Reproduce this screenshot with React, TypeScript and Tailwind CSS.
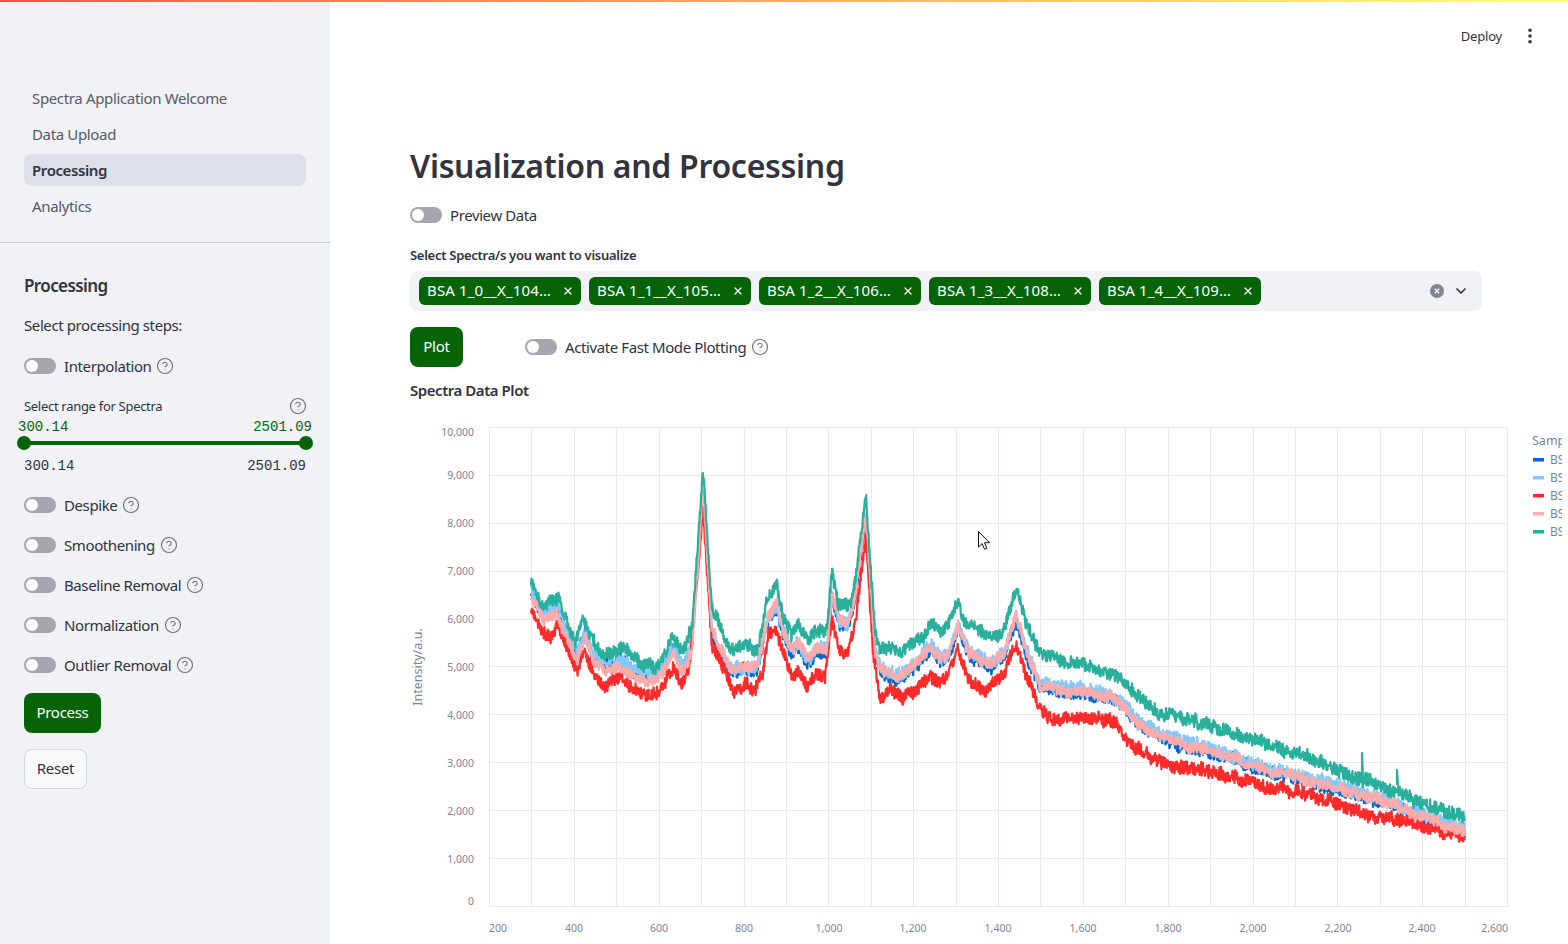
import { ChevronDown, CircleHelp, EllipsisVertical, X } from "lucide-react";

type Pt = [number, number];

// series outlines in page pixels, read off the plot
const greenLine: Pt[] = [[531,583],[543,608],[558,598],[575,642],[583,620],[597,650],[607,655],[618,647],[627,650],[640,662],[657,668],[673,637],[683,652],[692,627],[703,470],[712,607],[720,623],[730,652],[745,643],[757,650],[768,597],[777,585],[783,617],[792,633],[798,625],[808,642],[815,630],[827,630],[832,572],[838,603],[850,607],[855,583],[866,499],[875,633],[880,650],[890,647],[900,652],[924,635],[932,621],[940,632],[947,627],[958,600],[965,625],[973,623],[991,638],[1005,627],[1016,588],[1026,623],[1040,655],[1066,662],[1082,663],[1106,672],[1121,678],[1137,697],[1161,713],[1208,725],[1236,733],[1295,753],[1335,768],[1374,783],[1414,800],[1465,817]];
const redLine: Pt[] = [[531,607],[540,628],[550,640],[558,628],[567,647],[577,670],[584,653],[593,673],[603,685],[620,675],[633,687],[650,697],[663,687],[673,668],[683,685],[690,663],[703,510],[712,647],[720,660],[733,692],[747,683],[753,692],[763,673],[768,633],[775,628],[783,653],[793,678],[798,668],[807,688],[815,673],[825,678],[832,620],[840,650],[848,653],[855,622],[866,540],[873,653],[880,700],[890,690],[900,698],[916,693],[930,675],[938,683],[949,673],[958,648],[969,680],[985,692],[1003,678],[1016,643],[1026,673],[1040,710],[1052,718],[1082,717],[1117,723],[1129,745],[1153,757],[1177,767],[1216,772],[1256,783],[1295,792],[1335,803],[1374,817],[1414,823],[1465,838]];
const pinkLine: Pt[] = [[531,597],[543,620],[557,613],[567,640],[577,660],[585,637],[593,663],[607,670],[620,665],[633,677],[653,682],[663,673],[673,653],[683,672],[692,650],[703,490],[712,633],[720,647],[730,668],[745,665],[757,668],[768,617],[777,603],[783,630],[792,650],[798,643],[808,660],[817,647],[827,650],[832,593],[840,620],[848,623],[855,597],[866,515],[875,653],[882,670],[890,675],[900,677],[916,663],[931,645],[940,660],[949,655],[958,625],[969,652],[991,665],[1005,652],[1016,618],[1026,650],[1040,685],[1058,690],[1082,692],[1109,697],[1123,705],[1137,723],[1169,740],[1216,753],[1256,767],[1295,777],[1335,787],[1374,798],[1414,813],[1465,832]];

function rng(seed: number) {
  return () => {
    seed = (seed + 0x6d2b79f5) | 0;
    let t = Math.imul(seed ^ (seed >>> 15), 1 | seed);
    t = (t + Math.imul(t ^ (t >>> 7), 61 | t)) ^ t;
    return ((t ^ (t >>> 14)) >>> 0) / 4294967296;
  };
}

function yAt(line: Pt[], x: number) {
  for (let i = 1; i < line.length; i++) {
    if (x <= line[i][0]) {
      const [x0, y0] = line[i - 1];
      const [x1, y1] = line[i];
      return y0 + ((y1 - y0) * (x - x0)) / (x1 - x0);
    }
  }
  return line[line.length - 1][1];
}

function noisy(line: Pt[], seed: number, amp: number, offset: (x: number) => number = () => 0) {
  const r = rng(seed);
  let drift = 0;
  let d = "";
  for (let x = 531; x <= 1465; x += 0.42) {
    drift = drift * 0.9 + (r() - 0.5) * 1.8;
    const y = yAt(line, x) + offset(x) + drift + (r() - 0.5) * amp;
    d += `${d ? "L" : "M"}${x.toFixed(1)} ${y.toFixed(1)}`;
  }
  return d;
}

const blueOffset = (x: number) => (x < 700 ? -4 : x < 880 ? 4 : x < 1040 ? 3 : 1);
const lightOffset = (x: number) => (x < 700 ? -7 : x < 880 ? 1 : x < 1040 ? -1 : -3);

const series = [
  { color: "#0068c9", d: noisy(pinkLine, 11, 13, blueOffset) },
  { color: "#83c9ff", d: noisy(pinkLine, 23, 13, lightOffset) },
  { color: "#ff2b2b", d: noisy(redLine, 37, 13) },
  { color: "#ffabab", d: noisy(pinkLine, 41, 11) },
  { color: "#29b09d", d: noisy(greenLine, 59, 13) + "M1362 780L1362 753L1363 780M1397 785L1397 770L1398 785" },
];

const yLabels: [string, number][] = [["10,000",436],["9,000",479],["8,000",527],["7,000",575],["6,000",623],["5,000",671],["4,000",719],["3,000",767],["2,000",815],["1,000",863],["0",905]];
const xLabels: [string, number, "start" | "middle" | "end"][] = [["200",489,"start"],["400",574,"middle"],["600",659,"middle"],["800",744,"middle"],["1,000",829,"middle"],["1,200",913,"middle"],["1,400",998,"middle"],["1,600",1083,"middle"],["1,800",1168,"middle"],["2,000",1253,"middle"],["2,200",1338,"middle"],["2,400",1422,"middle"],["2,600",1508,"end"]];
const gridY = [427, 475, 523, 571, 619, 666, 714, 762, 810, 858, 906];
const gridX = Array.from({ length: 25 }, (_, i) => 489 + i * 42.42);
const legendRows = ["BSA 1_0__X_104...", "BSA 1_1__X_105...", "BSA 1_2__X_106...", "BSA 1_3__X_108...", "BSA 1_4__X_109..."];

const SpectraChart = () => (
  <svg viewBox="410 415 1158 530" className="block w-[1158px] h-[530px] shrink-0 font-['Noto_Sans',sans-serif]">
    {gridY.map((y) => (
      <line key={y} x1={489} x2={1507.5} y1={y + 0.5} y2={y + 0.5} stroke="#e6e8f2" />
    ))}
    {gridX.map((x) => (
      <line key={x} x1={Math.round(x) + 0.5} x2={Math.round(x) + 0.5} y1={427} y2={907} stroke="#e6e8f2" />
    ))}
    {series.map((s) => (
      <path key={s.color} d={s.d} fill="none" stroke={s.color} strokeWidth={2.2} strokeLinejoin="round" />
    ))}
    {yLabels.map(([label, y]) => (
      <text key={label} x={474} y={y} textAnchor="end" fontSize={10.5} fill="#808495">{label}</text>
    ))}
    {xLabels.map(([label, x, anchor]) => (
      <text key={label} x={x} y={932} textAnchor={anchor} fontSize={10.5} fill="#808495">{label}</text>
    ))}
    <text x={422} y={667} textAnchor="middle" fontSize={12.5} fill="#808495" transform="rotate(-90 422 667)">Intensity/a.u.</text>
    <text x={1532} y={445} fontSize={12.5} fill="#808495">Sample</text>
    {legendRows.map((label, i) => (
      <g key={label}>
        <rect x={1533} y={458 + i * 18} width={11} height={3.5} fill={series[i].color} />
        <text x={1550} y={464 + i * 18} fontSize={12} fill="#808495">{label}</text>
      </g>
    ))}
  </svg>
);

const Help = () => <CircleHelp size={18} strokeWidth={1.5} className="text-[#6f717c] shrink-0" />;

const Toggle = ({ label, help }: { label: string; help?: boolean }) => (
  <div className="flex items-center h-6">
    <span className="flex items-center w-8 h-4 p-0.5 rounded-full bg-[#a6a6b0] shrink-0">
      <span className="w-3 h-3 rounded-full bg-white" />
    </span>
    <span className="ml-2 text-[15px] tracking-[-0.4px] text-[#31333f]">{label}</span>
    {help && <span className="ml-[5px]"><Help /></span>}
  </div>
);

const Tag = ({ label }: { label: string }) => (
  <div className="flex items-center justify-between w-[162px] h-7 pb-px pl-2 pr-[7px] rounded-md bg-[#066406] text-white text-[15px] tracking-[0.15px]">
    <span>{label}</span>
    <X size={12} strokeWidth={2.5} />
  </div>
);

const navItems = ["Spectra Application Welcome", "Data Upload", "Processing", "Analytics"];

export default function App() {
  return (
    <div className="relative flex h-screen overflow-hidden bg-white text-[#31333f] font-['Noto_Sans',sans-serif]">
      <div className="absolute inset-x-0 top-0 h-0.5 bg-linear-to-r from-[#ff4b4b] to-[#fffd80]" />

      <aside className="w-[330px] shrink-0 pt-[82px] bg-[#f0f2f6]">
        <nav className="flex flex-col gap-1 px-6">
          {navItems.map((item) => (
            <div
              key={item}
              className={
                item === "Processing"
                  ? "flex items-center h-8 px-2 rounded-lg bg-[#dde0e8] text-[15px] tracking-[-0.4px] font-semibold text-[#31333f]"
                  : "flex items-center h-8 px-2 rounded-lg text-[15px] tracking-[-0.35px] text-[#575a68]"
              }
            >
              {item}
            </div>
          ))}
        </nav>
        <div className="mt-5 h-px bg-[#cbcdd3]" />
        <div className="px-6">
          <h2 className="mt-[29px] h-7 leading-7 text-[17px] tracking-[-0.6px] font-semibold">Processing</h2>
          <p className="mt-[13px] h-6 leading-6 text-[15px] tracking-[-0.4px]">Select processing steps:</p>
          <div className="mt-[17px]">
            <Toggle label="Interpolation" help />
          </div>
          <div className="mt-[18px] flex items-center justify-between h-5 pr-[-1px] text-[13px] tracking-[-0.3px]">
            <span className="pt-0.5">Select range for Spectra</span>
            <span className="-mr-px"><Help /></span>
          </div>
          <div className="-mx-1.5 mt-[3px] flex justify-between h-4 leading-4 text-[14px] text-[#066406] font-['Liberation_Mono',monospace]">
            <span>300.14</span>
            <span>2501.09</span>
          </div>
          <div className="relative mt-px h-3.5 flex items-center">
            <div className="w-full h-1 bg-[#066406]" />
            <span className="absolute -left-[7px] w-3.5 h-3.5 rounded-full bg-[#066406]" />
            <span className="absolute -right-[7px] w-3.5 h-3.5 rounded-full bg-[#066406]" />
          </div>
          <div className="mt-2 flex justify-between h-4 leading-4 text-[14px] font-['Liberation_Mono',monospace]">
            <span>300.14</span>
            <span>2501.09</span>
          </div>
          <div className="mt-[19px] flex flex-col gap-4">
            <Toggle label="Despike" help />
            <Toggle label="Smoothening" help />
            <Toggle label="Baseline Removal" help />
            <Toggle label="Normalization" help />
            <Toggle label="Outlier Removal" help />
          </div>
          <button className="mt-4 block w-[77px] h-10 pb-0.5 rounded-lg bg-[#066406] text-white text-[15px] tracking-[-0.3px]">Process</button>
          <button className="mt-4 block w-[63px] h-10 pb-0.5 rounded-lg border border-[#d5d8de] bg-[#f9f9fb] text-[15px] tracking-[-0.3px]">Reset</button>
        </div>
      </aside>

      <main className="flex-1 min-w-0 overflow-hidden">
        <header className="flex items-center justify-end gap-[18px] h-[72px] pr-[28px]">
          <span className="pt-px text-[13px] tracking-[-0.2px]">Deploy</span>
          <EllipsisVertical size={20} strokeWidth={2.2} />
        </header>
        <div className="pl-20 pr-[86px]">
          <h1 className="mt-[72px] h-11 leading-11 text-[32px] tracking-[-0.3px] font-semibold whitespace-nowrap">Visualization and Processing</h1>
          <div className="mt-[15px]">
            <Toggle label="Preview Data" />
          </div>
          <p className="mt-[18px] h-5 leading-5 text-[13px] tracking-[-0.28px] font-semibold">Select Spectra/s you want to visualize</p>
          <div className="mt-1.5 flex items-center h-10 pl-[9px] pr-[13px] rounded-lg bg-[#f0f2f6]">
            <div className="flex flex-1 gap-2">
              <Tag label="BSA 1_0__X_104…" />
              <Tag label="BSA 1_1__X_105…" />
              <Tag label="BSA 1_2__X_106…" />
              <Tag label="BSA 1_3__X_108…" />
              <Tag label="BSA 1_4__X_109…" />
            </div>
            <svg viewBox="0 0 14 14" className="w-3.5 h-3.5 mr-[9px]">
              <circle cx="7" cy="7" r="7" fill="#808495" />
              <path d="M4.8 4.8l4.4 4.4M9.2 4.8l-4.4 4.4" stroke="#f0f2f6" strokeWidth="1.4" />
            </svg>
            <ChevronDown size={16} strokeWidth={2.5} />
          </div>
          <div className="mt-4 flex items-center">
            <button className="w-[53px] h-10 pb-0.5 rounded-lg bg-[#066406] text-white text-[15px] tracking-[-0.2px]">Plot</button>
            <div className="ml-[62px]">
              <Toggle label="Activate Fast Mode Plotting" help />
            </div>
          </div>
          <p className="mt-[11px] h-6 leading-6 text-[15px] tracking-[-0.45px] font-semibold">Spectra Data Plot</p>
          <div className="relative mt-[13px] w-[1152px] overflow-hidden">
            <SpectraChart />
            {/* mouse pointer caught in the capture */}
            <svg viewBox="0 0 12 19" className="absolute left-[568px] top-[116px] w-3 h-[19px]">
              <path d="M.5.5v15.5l3.6-3.4 2.4 5.6 2.4-1-2.4-5.5h5z" fill="#fff" stroke="#111" strokeWidth="1" />
            </svg>
          </div>
        </div>
      </main>
    </div>
  );
}
